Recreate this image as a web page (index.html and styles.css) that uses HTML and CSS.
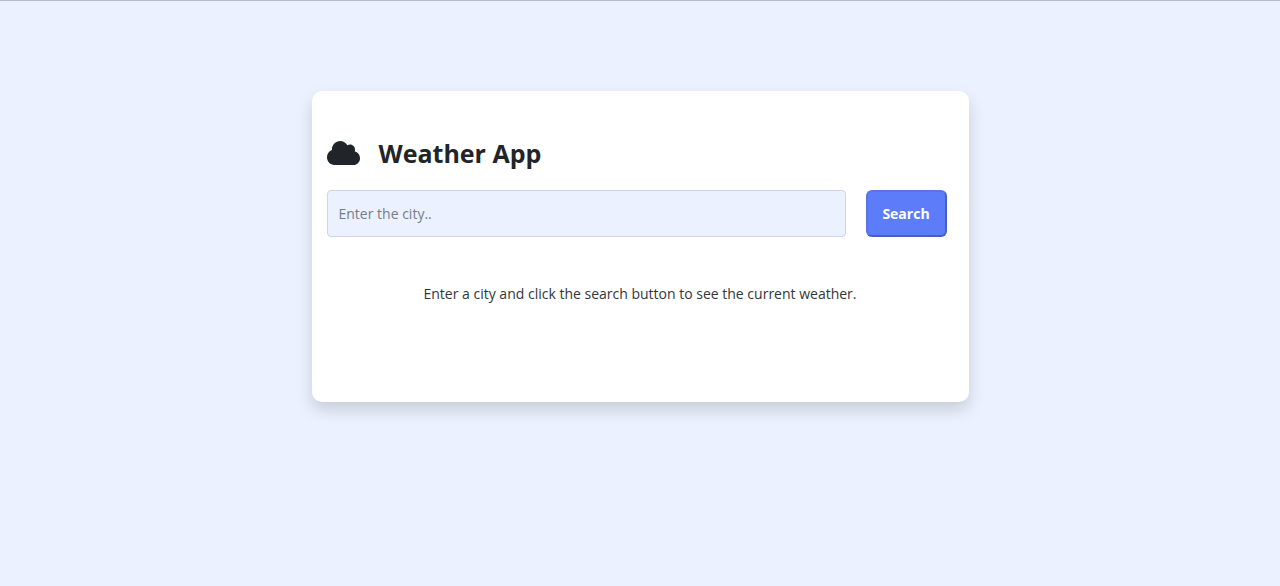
FILE: index.html
```html
<!DOCTYPE html>
<html lang="en">
<head>
  <meta charset="utf-8">
  <meta name="viewport" content="width=device-width, initial-scale=1">
  <title>Weather App</title>
  <link rel="stylesheet" href="styles.css">
</head>
<body>
  <main class="card">
    <h1 class="title">
      <svg class="title-icon" viewBox="0 32 640 448" preserveAspectRatio="none" aria-hidden="true"><path fill="currentColor" d="M537.6 226.6c4.1-10.7 6.4-22.4 6.4-34.6 0-53-43-96-96-96-19.7 0-38.1 6-53.3 16.2C367 64.2 315.3 32 256 32c-88.4 0-160 71.6-160 160 0 2.7.1 5.4.2 8.1C40.2 219.8 0 273.2 0 336c0 79.5 64.5 144 144 144h368c70.7 0 128-57.3 128-128 0-61.9-44-113.6-102.4-125.4z"/></svg>
      Weather App
    </h1>
    <form class="search">
      <input class="search-input" type="text" placeholder="Enter the city.." aria-label="City">
      <button class="search-button" type="submit">Search</button>
    </form>
    <p class="hint">Enter a city and click the search button to see the current weather.</p>
  </main>
</body>
</html>
```
FILE: styles.css
```css
* {
  box-sizing: border-box;
}

body {
  margin: 0;
  padding: 90px 16px;
  border-top: 1px solid #b5bccf;
  background: #ebf1ff;
  color: #212529;
  font-family: "Segoe UI", "Open Sans", "Noto Sans", sans-serif;
  font-size: 14px;
  line-height: 24px;
}

.card {
  max-width: 657px;
  margin: 0 auto;
  padding: 44px 22px 96px 15px;
  border-radius: 10px;
  background: #fff;
  box-shadow: 0 8px 16px rgba(0, 0, 0, 0.15);
}

.title {
  display: flex;
  align-items: center;
  gap: 19px;
  margin: 0 0 19px;
  font-size: 25px;
  line-height: 36px;
  font-weight: 700;
}

.title-icon {
  width: 33px;
  height: 24px;
}

.search {
  display: flex;
  gap: 20px;
}

.search-input {
  flex: 1;
  min-width: 0;
  height: 47px;
  padding: 0 11px;
  border: 1px solid #ced4e4;
  border-radius: 4px;
  background: #ebf1ff;
  color: inherit;
  font: inherit;
}

.search-input::placeholder {
  color: #757d88;
  opacity: 1;
}

.search-button {
  width: 81px;
  padding: 0;
  border: 2px solid;
  border-color: #5874e6 #4560c4 #4560c4 #5874e6;
  border-radius: 6px;
  background: #5c7cfa;
  color: #fff;
  font: inherit;
  font-weight: 700;
}

.hint {
  margin: 45px -7px 0 0;
  color: #32363a;
  text-align: center;
}
```
